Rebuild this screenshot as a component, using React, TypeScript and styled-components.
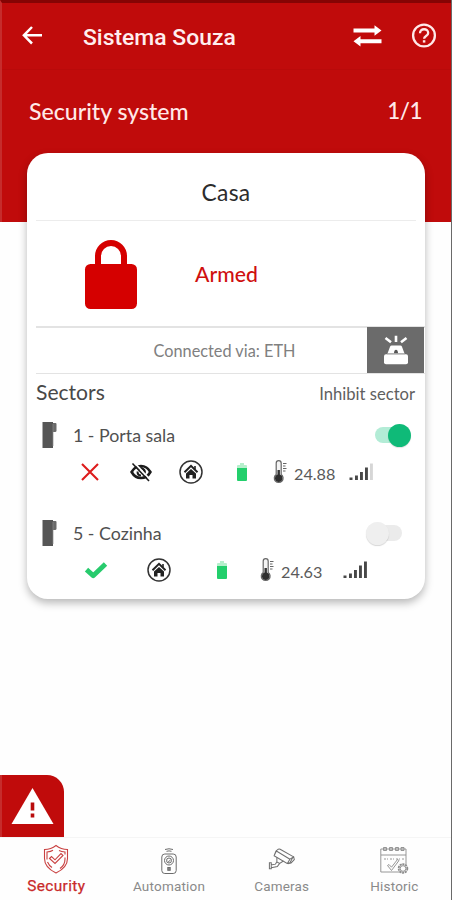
import React from 'react';
import styled, { createGlobalStyle } from 'styled-components';

const GlobalStyle = createGlobalStyle`
  * { box-sizing: border-box; }
  html, body { margin: 0; padding: 0; }
  body { background: #fff; font-family: Lato, sans-serif; }
`;

const Screen = styled.div`
  display: flex;
  flex-direction: column;
  width: 452px;
  height: 900px;
  background: #fefefe;
  border-right: 1px solid #6a6a6a;
  overflow: hidden;
`;

const Hero = styled.header`
  flex: none;
  height: 222px;
  background: #c00b0b;
  border-top: 3px solid #850404;
  border-left: 2px solid #c62c2c;
  color: #fff;
`;

const Toolbar = styled.div`
  display: flex;
  align-items: center;
  height: 67px;
  padding: 0 14px 0 19px;
  border-bottom: 1px solid #b90a0a;
`;

const Title = styled.h1`
  flex: 1;
  margin: 3px 0 0 38px;
  font: 500 22.9px/30px Roboto, sans-serif;
  color: #ffeeee;
`;

const ToolbarIcons = styled.div`
  display: flex;
  align-items: center;
  gap: 29px;
`;

const SectionBar = styled.div`
  display: flex;
  justify-content: space-between;
  align-items: center;
  height: 82px;
  padding: 0 29px 0 27px;
  font-size: 23.1px;
  line-height: 30px;
  font-weight: 500;
  color: #ffe9e9;
`;

const Counter = styled.span`
  font-size: 22.3px;
  letter-spacing: -0.4px;
`;

const Card = styled.main`
  flex: none;
  width: 398px;
  height: 446px;
  margin: -69px 0 0 27px;
  background: #fff;
  border-radius: 21px;
  box-shadow: 0 4px 9px rgba(0, 0, 0, 0.28);
`;

const CardTitle = styled.h2`
  height: 68px;
  margin: 0 9px;
  padding-top: 9px;
  border-bottom: 1.5px solid #ececec;
  font-size: 22.8px;
  line-height: 60px;
  font-weight: 400;
  text-align: center;
  letter-spacing: 0.3px;
  color: #2c2c2c;
`;

const StatusRow = styled.section`
  display: flex;
  align-items: center;
  height: 105px;
  padding-left: 57px;
  svg { margin-top: 2px; }
`;

const StatusText = styled.span`
  margin-left: 57px;
  font-size: 21.2px;
  line-height: 28px;
  font-weight: 500;
  color: #cf0f0f;
`;

const ConnectionRow = styled.section`
  display: flex;
  height: 48px;
  margin-left: 9px;
  border-top: 2px solid #e3e3e3;
  border-bottom: 1.5px solid #e3e3e3;
`;

const ConnectionText = styled.span`
  flex: 1;
  padding-left: 46px;
  font-size: 16.3px;
  line-height: 45px;
  text-align: center;
  color: #808080;
`;

const SirenButton = styled.button`
  display: flex;
  align-items: center;
  justify-content: center;
  width: 57px;
  height: 46px;
  margin: -1px 1px 0 0;
  padding: 0;
  border: 0;
  background: #6b6b6b;
`;

const SectorsHeader = styled.div`
  display: flex;
  justify-content: space-between;
  height: 37px;
  padding: 0 10px 0 9px;
`;

const SectorsTitle = styled.h3`
  margin: 0;
  font-size: 21.1px;
  line-height: 35px;
  font-weight: 400;
  color: #484848;
`;

const InhibitLabel = styled.span`
  font-size: 16.6px;
  line-height: 41px;
  color: #606060;
`;

const Sector = styled.article`
  height: 98px;
`;

const SectorHead = styled.div<{ $inset: number }>`
  display: flex;
  align-items: center;
  height: 48px;
  padding: 0 ${(p) => p.$inset}px 0 15px;
`;

const SectorName = styled.span`
  flex: 1;
  margin-left: 16px;
  font-size: 17.8px;
  line-height: 24px;
  color: #505050;
`;

const Switch = styled.button<{ $on: boolean }>`
  display: flex;
  align-items: center;
  justify-content: ${(p) => (p.$on ? 'flex-end' : 'flex-start')};
  width: ${(p) => (p.$on ? 32 : 32)}px;
  height: 16px;
  padding: 0;
  border: 0;
  border-radius: 8px;
  background: ${(p) => (p.$on ? '#b3ecd6' : '#ebebeb')};
`;

const Knob = styled.span<{ $on: boolean }>`
  flex: none;
  width: 23px;
  height: 23px;
  margin: ${(p) => (p.$on ? '0 -4px 0 0' : '0 0 0 -4px')};
  border-radius: 50%;
  background: ${(p) => (p.$on ? '#0fba78' : '#efefef')};
  box-shadow: 0 1px 1px ${(p) => (p.$on ? 'rgba(0,0,0,.12)' : 'rgba(0,0,0,.16)')};
`;

const Readings = styled.div`
  display: flex;
  align-items: center;
  height: 25px;
`;

const Reading = styled.span<{ $before: number }>`
  display: flex;
  flex: none;
  margin-left: ${(p) => p.$before}px;
`;

const Temperature = styled.span`
  width: 42px;
  margin: 4px 0 0 6px;
  font-size: 16.2px;
  line-height: 20px;
  color: #5a5a5a;
`;

const AlertButton = styled.button`
  display: flex;
  flex: none;
  align-items: flex-start;
  justify-content: center;
  width: 64px;
  height: 62px;
  margin-top: auto;
  padding: 12px 2px 0 0;
  border: 0;
  border-left: 2px solid #c62c2c;
  border-top-right-radius: 17px;
  background: #c00b0b;
`;

const Nav = styled.nav`
  display: grid;
  flex: none;
  grid-template-columns: repeat(4, 112.7px);
  height: 63px;
  border-top: 1px solid #f5f5f5;
`;

const NavItem = styled.a<{ $active?: boolean }>`
  display: flex;
  flex-direction: column;
  align-items: center;
  padding-top: 6px;
  color: ${(p) => (p.$active ? '#c92a2a' : '#8a8a8a')};
  font: ${(p) => (p.$active ? '400 15.4px' : '400 13.5px')} / 18px Roboto, sans-serif;
  letter-spacing: ${(p) => (p.$active ? 0.4 : 0.2)}px;
  -webkit-text-stroke: ${(p) => (p.$active ? '0.25px #c92a2a' : '0')};
  svg { display: block; height: 30px; margin-bottom: 3px; }
`;

const BackIcon = () => (
  <svg width="24" height="24" viewBox="0 0 24 24" fill="none" stroke="#fff" strokeWidth="2.5">
    <path d="M21 11.300H3M11 3 2.900 11.300l8.100 8.200" />
  </svg>
);

const SwapIcon = () => (
  <svg width="29" height="22" viewBox="0 0 29 22" fill="#fff">
    <path d="M.5 3.500h21V.3l7 5.200-7 5.200V7.500H.5zM28.500 14.300h-21v-3.200l-7 5.200 7 5.200v-3.200h21z" />
  </svg>
);

const HelpIcon = () => (
  <svg width="26" height="26" viewBox="0 0 26 26" fill="none" stroke="#ffe9e9">
    <circle cx="13" cy="12.500" r="10.900" strokeWidth="2.300" />
    <path d="M9 10.200c0-5.300 8.200-5.200 8.200-.2 0 3.100-4.100 3-4.100 5.800" strokeWidth="2.300" />
    <path d="M13.100 17.200v2.400" strokeWidth="2.500" />
  </svg>
);

const LockIcon = () => (
  <svg width="54" height="72" viewBox="0 0 54 72">
    <path d="M14 29V17a13 13 0 0 1 26 0v12" fill="none" stroke="#d50000" strokeWidth="6" />
    <rect x="1" y="25" width="52" height="45" rx="5.5" fill="#d50000" />
  </svg>
);

const SirenIcon = () => (
  <svg width="26" height="30" viewBox="0 0 26 30" fill="#fff">
    <path d="M4.500 18.500 7 11.700q.5-1.200 1.700-1.200h8.600q1.200 0 1.700 1.200l2.500 6.800z" />
    <rect x="1" y="19.300" width="24" height="10" rx="2" />
    <path d="M13 7V.800M8 7.300 2.500 3M18 7.300 23.500 3" stroke="#fff" strokeWidth="2.600" />
    <path d="M11 18.200c0-4.600 4-4.600 4 0z" fill="#555" />
    <path d="M4 18.900h18" stroke="#aaa" strokeWidth=".8" />
  </svg>
);

const SensorIcon = () => (
  <svg width="15" height="28" viewBox="0 0 15 28">
    <path d="M10 2h3.500q1 0 1 1v6.500q0 1.500-1.500 1.500h-3z" fill="#6a6a6a" />
    <path d="M.5 1h10.500v26H.5z" fill="#565656" />
    <path d="M11 3v22" stroke="#8b8b8b" strokeWidth=".7" />
  </svg>
);

const CrossIcon = () => (
  <svg width="18" height="18" viewBox="0 0 18 18" stroke="#dd1c1c" strokeWidth="2.100">
    <path d="m1 1 16 16M17 1 1 17" />
  </svg>
);

const CheckIcon = () => (
  <svg width="24" height="20" viewBox="0 0 24 20" fill="none" stroke="#27cb6d" strokeWidth="4.900">
    <path d="m2.500 9.700 6.700 6L21.500 4" strokeLinejoin="round" />
  </svg>
);

const EyeOffIcon = () => (
  <svg width="22" height="20" viewBox="0 0 22 20" fill="none" stroke="#1c1c1c">
    <path d="M1.600 10Q5 4 11 4t9.400 6q-3.400 6-9.400 6T1.600 10z" strokeWidth="2.600" />
    <path d="M8.500 7.500c3-3 7.500.5 5.700 4.200" strokeWidth="2.400" />
    <path d="M7.500 9.500c0 2.400 1.500 4 3.500 4" strokeWidth="2" />
    <path d="M4.200.700 20 17.500" stroke="#fff" strokeWidth="1.800" />
    <path d="M2.500 1.500 19 19" strokeWidth="1.600" />
  </svg>
);

const HomeIcon = () => (
  <svg width="24" height="24" viewBox="0 0 24 24">
    <circle cx="12" cy="12" r="11" fill="#fff" stroke="#333" strokeWidth="1.500" />
    <path d="m5.500 12.200 6.500-6.400 6.500 6.400" fill="none" stroke="#222" strokeWidth="2" />
    <path d="M7 13.500 12 9l5 4.500v5h-3.500V15h-3v3.500H7z" fill="#222" />
    <path d="M16 6v3" stroke="#222" strokeWidth="1.600" />
  </svg>
);

const BatteryIcon = () => (
  <svg width="12" height="20" viewBox="0 0 12 20">
    <path d="M1 6V4q0-1 1-1h2V1h4v2h2q1 0 1 1v2z" fill="#b6efcc" />
    <path d="M1 6h10v12q0 1-1 1H2q-1 0-1-1z" fill="#23cf6c" />
  </svg>
);

const ThermometerIcon = () => (
  <svg width="15" height="24" viewBox="0 0 15 24">
    <path d="M3.200 14.500V3.200a2.500 2.500 0 0 1 5 0v11.300a4.400 4.400 0 1 1-5 0z" fill="#f4f4f4" stroke="#666" strokeWidth="1.200" />
    <path d="M5.700 10v8" stroke="#333" strokeWidth="2.400" />
    <circle cx="5.700" cy="18.300" r="3.700" fill="#2e2e2e" />
    <path d="M10 3.500h3.500M10 6h2.500M10 8.500h3.500M10 11h2.500" stroke="#666" strokeWidth="1.100" />
  </svg>
);

const SignalIcon = ({ weak }: { weak?: boolean }) => (
  <svg width="25" height="18" viewBox="0 0 25 18" fill="#484848">
    <path d="M.5 14.500h3V17h-3zM6 12.500h2.900V17H6zM11 9h2.900v8H11zM16 4.500h2.900V17H16z" />
    <path d="M21 .5h2.900V17H21z" fill={weak ? '#d6d6d6' : '#484848'} />
  </svg>
);

const WarningIcon = () => (
  <svg width="43" height="38" viewBox="0 0 43 38">
    <path d="M21.500 1 42.500 37H.5z" fill="#fff" />
    <path d="M21.500 15.500v8M21.500 26.500v4" stroke="#b90c0c" strokeWidth="3.600" />
  </svg>
);

const ShieldIcon = () => (
  <svg width="28" height="30" viewBox="0 0 28 30" fill="none" stroke="#c94040" strokeWidth="1.100">
    <path d="M14 1.500q5 4 11.500 4v9q0 9-11.500 14.500Q2.500 23.500 2.500 14.500v-9q6.500 0 11.500-4z" />
    <path d="M5 15.500V8q4-.4 6-1.700M23 13.500v1.500q0 6-5 9.500M5.500 18q1.500 3.500 4.500 5.500M17 6.500q2.500 1.200 6 1.500v2.500" />
    <path d="m7.500 14.500 2-2 3.500 3.300 6-6.300 2 2-8 8z" />
  </svg>
);

const RemoteIcon = () => (
  <svg width="20" height="30" viewBox="0 0 20 30" fill="none" stroke="#6c6c6c" strokeWidth="1">
    <path d="M6 5.500q4-1.500 8 0M7.500 7.300q2.500-.8 5 0" />
    <rect x="2.800" y="10" width="14.400" height="19.500" rx="3" />
    <circle cx="10" cy="16.500" r="4.500" />
    <circle cx="10" cy="16.500" r="2.500" />
    <path d="m8.800 16.700 1 1 1.800-2" />
    <rect x="8.800" y="23.500" width="2.400" height="2.800" fill="#888" />
  </svg>
);

const CameraIcon = () => (
  <svg width="28" height="30" viewBox="0 -2 30 32" fill="none" stroke="#707070" strokeWidth="1.100">
    <path d="m8.500 5.500 2.500-2q1-.6 2 0l14 8-3.500 6.500-3 .8-14-8.300zM6.500 10.500 9 5.500l14.500 8.700-2.800 4.600M23.500 14.200l4-2.500.7 3-3.500 3.500-3.500.8" />
    <path d="M9.500 12.500v4.700l3 1.500 4-2.500M9.500 17l-1.500 2.500-5 1M12.500 18.700l-2.500 3.300-6.500 1.500M1.500 18h2v6.500h-2z" />
  </svg>
);

const HistoryIcon = () => (
  <svg width="30" height="30" viewBox="0 -1 30 30" fill="none" stroke="#8c8c8c" strokeWidth=".9">
    <path d="M21 27H1.800V4H27v16M2 10h25" />
    <path d="M4.500 2.500h3v3h-3zM10.500 2.500h3v3h-3zM16.500 2.500h3v3h-3zM22 2.500h3v3h-3z" fill="#bbb" />
    <path d="M5 14h4M11 14h4M17 14h4M23 14h2" strokeDasharray="2 1" />
    <path d="m8.500 20.500 1.500-1 2.500 2.700 6-7.700 1.500 1-7.500 10z" />
    <circle cx="24" cy="23.500" r="4.400" fill="#ddd" strokeWidth="1.700" strokeDasharray="2 .8" />
    <circle cx="24" cy="23.500" r="2.800" fill="#fff" />
  </svg>
);

export default function App() {
  return (
    <>
      <GlobalStyle />
      <Screen>
        <Hero>
          <Toolbar>
            <BackIcon />
            <Title>Sistema Souza</Title>
            <ToolbarIcons>
              <SwapIcon />
              <HelpIcon />
            </ToolbarIcons>
          </Toolbar>
          <SectionBar>
            <span>Security system</span>
            <Counter>1/1</Counter>
          </SectionBar>
        </Hero>
        <Card>
          <CardTitle>Casa</CardTitle>
          <StatusRow>
            <LockIcon />
            <StatusText>Armed</StatusText>
          </StatusRow>
          <ConnectionRow>
            <ConnectionText>Connected via: ETH</ConnectionText>
            <SirenButton aria-label="Siren"><SirenIcon /></SirenButton>
          </ConnectionRow>
          <SectorsHeader>
            <SectorsTitle>Sectors</SectorsTitle>
            <InhibitLabel>Inhibit sector</InhibitLabel>
          </SectorsHeader>
          <Sector>
            <SectorHead $inset={18}>
              <SensorIcon />
              <SectorName>1 - Porta sala</SectorName>
              <Switch $on><Knob $on /></Switch>
            </SectorHead>
            <Readings>
              <Reading $before={54}><CrossIcon /></Reading>
              <Reading $before={31}><EyeOffIcon /></Reading>
              <Reading $before={27}><HomeIcon /></Reading>
              <Reading $before={33}><BatteryIcon /></Reading>
              <Reading $before={25}><ThermometerIcon /></Reading>
              <Temperature>24.88</Temperature>
              <Reading $before={13}><SignalIcon weak /></Reading>
            </Readings>
          </Sector>
          <Sector>
            <SectorHead $inset={23}>
              <SensorIcon />
              <SectorName>5 - Cozinha</SectorName>
              <Switch $on={false}><Knob $on={false} /></Switch>
            </SectorHead>
            <Readings>
              <Reading $before={57}><CheckIcon /></Reading>
              <Reading $before={39}><HomeIcon /></Reading>
              <Reading $before={45}><BatteryIcon /></Reading>
              <Reading $before={32}><ThermometerIcon /></Reading>
              <Temperature>24.63</Temperature>
              <Reading $before={20}><SignalIcon /></Reading>
            </Readings>
          </Sector>
        </Card>
        <AlertButton aria-label="Alerts"><WarningIcon /></AlertButton>
        <Nav>
          <NavItem $active><ShieldIcon />Security</NavItem>
          <NavItem><RemoteIcon />Automation</NavItem>
          <NavItem><CameraIcon />Cameras</NavItem>
          <NavItem><HistoryIcon />Historic</NavItem>
        </Nav>
      </Screen>
    </>
  );
}
